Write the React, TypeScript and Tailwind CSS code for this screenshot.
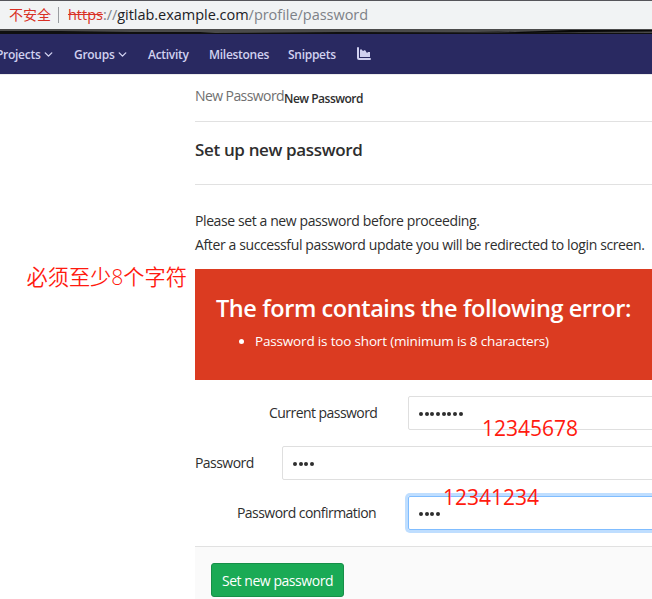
import { ChevronDown } from "lucide-react";

const rowLabel = "flex h-[34px] shrink-0 items-center pb-[1px] text-[14px] tracking-[-0.55px] text-[#2e2e2e]";
const field = "flex h-[34px] shrink-0 items-center rounded-[2px] border pl-[10px]";

function Dots({ count }: { count: number }) {
  return (
    <span className="flex gap-[1.8px] pt-[2px]">
      {Array.from({ length: count }, (_, i) => (
        <i key={i} className="block size-[3.9px] rounded-full bg-[#2e2e2e]" />
      ))}
    </span>
  );
}

function AddressBar() {
  return (
    <div className="h-[34px]">
      <div className="h-px bg-[#55555a]" />
      <div className="flex h-[28px] items-center bg-[#f1f3f4] pb-[1px] pl-[9px] text-[14.5px] tracking-[-0.03px] whitespace-nowrap">
        <span className="w-[49px] text-[14px] text-[#d93025]">不安全</span>
        <span className="h-[16px] w-px bg-[#9a9da1]" />
        <span className="ml-[9px] text-[#7d8187]">
          <span className="text-[#d93025] line-through">https</span>://
          <span className="text-[#202124]">gitlab.example.com</span>/profile/password
        </span>
      </div>
      <svg className="block h-[5px] w-[652px]" viewBox="0 0 652 5" preserveAspectRatio="none">
        <rect width="652" height="5" fill="#4b4b4b" />
        <path d="M0 2L60 2 130 3 200 3 215 4 340 3 652 4V5H0Z" fill="#101010" />
        <path d="M475 2L515 3 570 1 652 1V2.5L580 3 520 4Z" fill="#080808" />
      </svg>
    </div>
  );
}

function NavBar() {
  return (
    <nav className="flex h-[40px] items-center bg-[#292961] pt-[1px] text-[12px] font-semibold tracking-[-0.28px] whitespace-nowrap text-[#d1d1f0]">
      <span className="ml-[-4px] w-[44px]">Projects</span>
      <ChevronDown className="ml-[2px] size-[13px]" strokeWidth={2.6} />
      <span className="ml-[19px] w-[40px]">Groups</span>
      <ChevronDown className="ml-[2px] size-[13px]" strokeWidth={2.6} />
      <span className="ml-[19px] w-[61px]">Activity</span>
      <span className="w-[79px]">Milestones</span>
      <span className="w-[69px]">Snippets</span>
      <svg className="mb-[2px] size-[14px]" viewBox="0 0 14 14" fill="currentColor">
        <path d="M0 1a1 1 0 0 1 2 0v10h11a1 1 0 0 1 0 2H2a2 2 0 0 1-2-2Z" />
        <path d="M3 3l1-1 2 2 2-1 2 3 1-1 2 0v5H3Z" />
      </svg>
    </nav>
  );
}

export default function App() {
  return (
    <div className="relative h-[599px] w-[652px] overflow-hidden bg-white font-['Open_Sans','Noto_Sans_CJK_SC',sans-serif]">
      <AddressBar />
      <NavBar />
      <div className="h-px bg-[#ececec]" />
      <main className="ml-[195px] whitespace-nowrap">
        <div className="flex h-[47px] border-b border-[#e1e1e1] text-[#2e2e2e]">
          <span className="w-[89px] pt-[11px] text-[14px] leading-[20px] tracking-[-0.58px] text-[#707070]">New Password</span>
          <span className="pt-[14px] text-[12px] leading-[20px] font-semibold tracking-[-0.5px]">New Password</span>
        </div>
        <h1 className="flex h-[63px] items-center border-b border-[#e1e1e1] pb-[7px] text-[17px] font-semibold tracking-[-0.35px] text-[#2e2e2e]">
          Set up new password
        </h1>
        <div className="h-[84px] pt-[24px] text-[14px] leading-[24px] tracking-[-0.4px] text-[#2e2e2e]">
          <p>Please set a new password before proceeding.</p>
          <p className="tracking-[-0.38px]">After a successful password update you will be redirected to login screen.</p>
        </div>
        <section className="h-[111px] bg-[#db3b21] pt-[23px] pl-[21px] text-white">
          <h2 className="text-[23.5px] leading-[32px] font-semibold tracking-[-0.42px]">The form contains the following error:</h2>
          <div className="flex items-center pt-[7px] pl-[23px] text-[13.5px] leading-[20px] tracking-[-0.17px]">
            <i className="mr-[11px] block size-[5px] rounded-full bg-white" />
            <span>Password is too short (minimum is 8 characters)</span>
          </div>
        </section>
        <form className="flex flex-col gap-[16px] pt-[16px]">
          <div className="flex">
            <label className={`${rowLabel} w-[213px] pl-[74px]`}>Current password</label>
            <div className={`${field} w-[260px] border-[#dfdfdf]`}>
              <Dots count={8} />
            </div>
          </div>
          <div className="flex">
            <label className={`${rowLabel} w-[87px]`}>Password</label>
            <div className={`${field} w-[390px] border-[#dfdfdf]`}>
              <Dots count={4} />
            </div>
          </div>
          <div className="flex">
            <label className={`${rowLabel} w-[213px] pl-[42px]`}>Password confirmation</label>
            <div className={`${field} w-[260px] border-[#80bdff] shadow-[0_0_0_3px_#bfdeff]`}>
              <Dots count={4} />
            </div>
          </div>
          <div className="h-[60px] border-t border-[#e1e1e1] bg-[#fafafa] pt-[16px] pl-[16px]">
            <button className="flex h-[34px] w-[133px] items-center justify-center rounded-[3px] border border-[#168f48] bg-[#1aaa55] text-[14px] tracking-[-0.45px] text-white">
              Set new password
            </button>
          </div>
        </form>
      </main>
      <span className="absolute top-[262px] left-[26.5px] text-[21.2px] leading-[30px] font-[350] whitespace-nowrap text-[#ff1a0f]">必须至少8个字符</span>
      <span className="absolute top-[413px] left-[482px] text-[21px] leading-[30px] text-[#ff1a0f]">12345678</span>
      <span className="absolute top-[482px] left-[443px] text-[21px] leading-[30px] text-[#ff1a0f]">12341234</span>
    </div>
  );
}
